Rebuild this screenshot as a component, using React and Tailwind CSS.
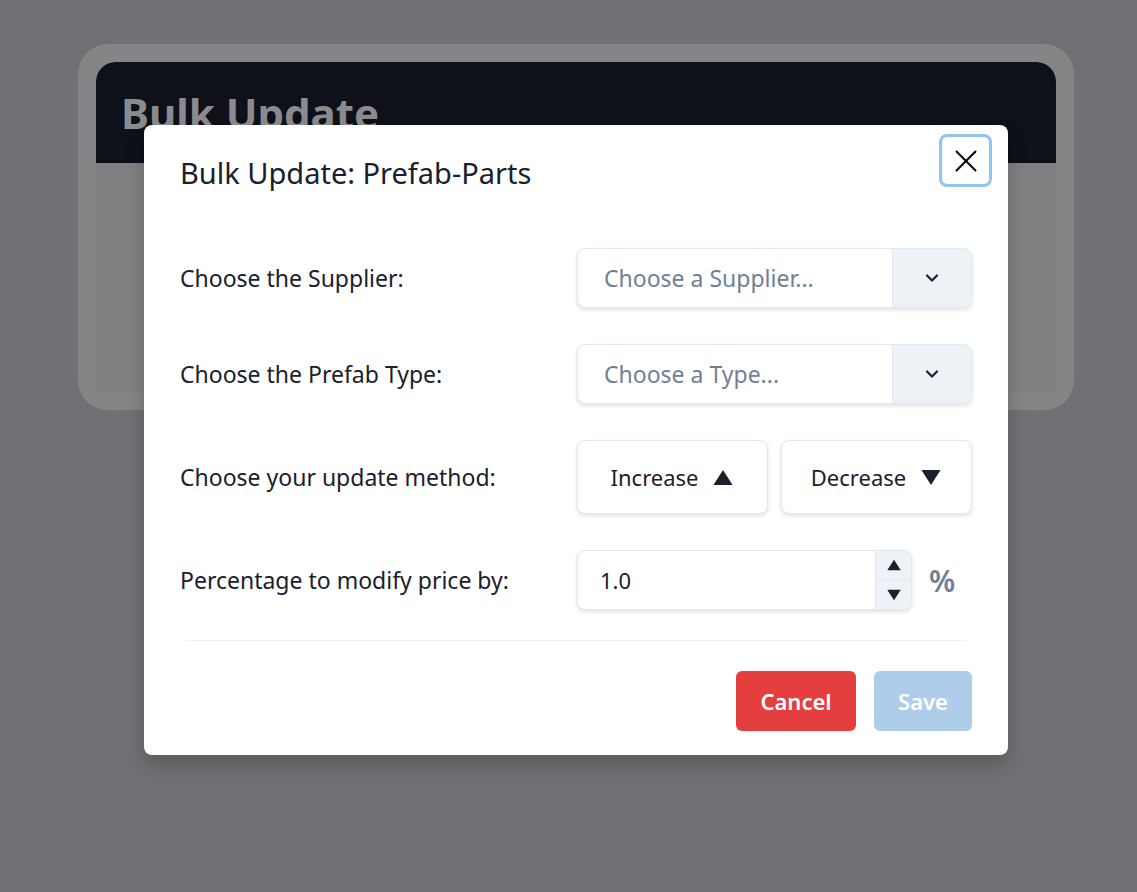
import { ChevronDown, X } from "lucide-react";

const font = { fontFamily: '"Noto Sans", "Open Sans", sans-serif' };

function Triangle({ up = true, className = "" }) {
  return (
    <svg viewBox="0 0 20 16" className={className} fill="currentColor">
      {up ? <path d="M10 1 L19 15 L1 15 Z" /> : <path d="M1 1 L19 1 L10 15 Z" />}
    </svg>
  );
}

function SelectBox({ placeholder }) {
  return (
    <div className="flex h-[60px] w-full overflow-hidden rounded-lg border border-[#e2e8f0] bg-white shadow-[0_2px_4px_rgba(0,0,0,0.12)]">
      <div className="flex flex-1 items-center pl-[26px] text-[23px] text-[#718096]">{placeholder}</div>
      <div className="flex w-[79px] items-center justify-center border-l border-[#e2e8f0] bg-[#edf2f7] text-[#1a202c]">
        <ChevronDown size={20} strokeWidth={2.6} />
      </div>
    </div>
  );
}

function MethodButton({ label, up }) {
  return (
    <button
      type="button"
      className="flex h-[74px] flex-1 items-center justify-center gap-[14px] rounded-lg border border-[#e2e8f0] bg-white text-[22px] text-[#1a202c] shadow-[0_2px_4px_rgba(0,0,0,0.12)]"
    >
      <span>{label}</span>
      <Triangle up={up} className="h-[17px] w-[22px]" />
    </button>
  );
}

export default function App() {
  const rows = [
    { label: "Choose the Supplier:", control: <SelectBox placeholder="Choose a Supplier..." /> },
    { label: "Choose the Prefab Type:", control: <SelectBox placeholder="Choose a Type..." /> },
    {
      label: "Choose your update method:",
      control: (
        <div className="flex w-full gap-[13px]">
          <MethodButton label="Increase" up />
          <MethodButton label="Decrease" up={false} />
        </div>
      ),
    },
    {
      label: "Percentage to modify price by:",
      control: (
        <div className="flex w-full items-center">
          <div className="flex h-[60px] w-[335px] overflow-hidden rounded-lg border border-[#e2e8f0] bg-white shadow-[0_2px_4px_rgba(0,0,0,0.12)]">
            <div className="flex flex-1 items-center pl-[22px] text-[22px] text-[#1a202c]">1.0</div>
            <div className="flex w-[36px] flex-col border-l border-[#e2e8f0] bg-[#edf2f7] text-[#1a202c]">
              <div className="flex flex-1 items-center justify-center border-b border-[#e2e8f0]">
                <Triangle up className="h-[12px] w-[16px]" />
              </div>
              <div className="flex flex-1 items-center justify-center">
                <Triangle up={false} className="h-[12px] w-[16px]" />
              </div>
            </div>
          </div>
          <span className="flex-1 text-center text-[30px] font-semibold text-[#718096]">%</span>
        </div>
      ),
    },
  ];

  return (
    <div className="relative min-h-screen bg-[#6f7174]" style={font}>
      <div className="pl-[78px] pt-[44px]">
        <div className="w-[996px] rounded-[30px] bg-[#848586] p-[18px]">
          <div className="flex h-[101px] items-start rounded-t-[20px] bg-[#0e111a] px-[25px] pt-[26px]">
            <h1 className="text-[42px] font-bold leading-[50px] text-[#898b8e]">Bulk Update</h1>
          </div>
          <div className="h-[229px] bg-[#7f8081]" />
        </div>
      </div>

      <div className="absolute left-[144px] top-[125px] flex h-[630px] w-[864px] flex-col rounded-lg bg-white shadow-[0_10px_20px_rgba(0,0,0,0.2)]">
        <div className="flex items-start justify-between pl-9 pr-4 pt-[9px]">
          <h2 className="mt-[21px] text-[29px] leading-[36px] text-[#1a202c]">Bulk Update: Prefab-Parts</h2>
          <button
            type="button"
            className="flex h-[53px] w-[53px] items-center justify-center rounded-lg border-[3px] border-[#90c5ee] text-black"
          >
            <X size={38} strokeWidth={1.2} />
          </button>
        </div>

        <div className="mt-[57px] grid grid-cols-2 gap-y-9 px-9">
          {rows.map((row) => (
            <div key={row.label} className="contents">
              <div className="flex items-center text-[23px] text-[#1a202c]">{row.label}</div>
              <div className="flex items-center pl-px">{row.control}</div>
            </div>
          ))}
        </div>

        <div className="mx-[42px] mt-[30px] border-t border-[#edf0f5]" />

        <div className="flex justify-end gap-[18px] px-9 pt-[30px]">
          <button type="button" className="h-[60px] w-[120px] rounded-md bg-[#e53e3e] text-[22px] font-semibold text-white">
            Cancel
          </button>
          <button type="button" className="h-[60px] w-[98px] rounded-md bg-[#aecdeb] text-[22px] font-semibold text-white">
            Save
          </button>
        </div>
      </div>
    </div>
  );
}
